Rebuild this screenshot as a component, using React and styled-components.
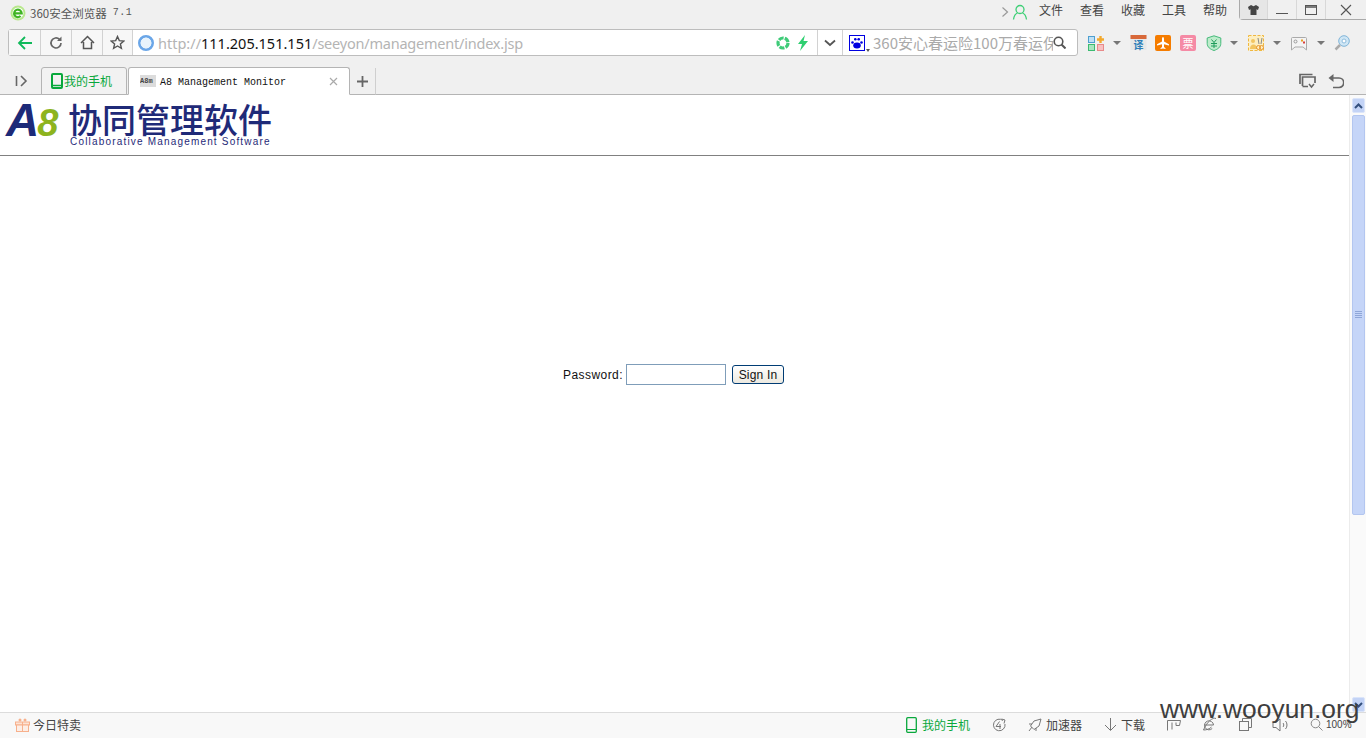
import styled, { createGlobalStyle } from "styled-components";

const GlobalStyle = createGlobalStyle`
  html, body {
    margin: 0;
    padding: 0;
    background: #fff;
    overflow: hidden;
  }
  * { box-sizing: border-box; }
`;

const cjk = `"Noto Sans CJK SC", "Noto Sans", sans-serif`;

const Shell = styled.div`
  position: relative;
  width: 1366px;
  height: 738px;
  display: flex;
  flex-direction: column;
  overflow: hidden;
  font-family: ${cjk};
`;

/* browser chrome */
const Chrome = styled.div`
  height: 95px;
  flex: none;
  display: flex;
  flex-direction: column;
  background: #f0f0f0;
  border-bottom: 1px solid #b4b4b4;
`;

const TitleBar = styled.div`
  height: 29px;
  flex: none;
  display: flex;
  align-items: flex-start;
  padding-left: 10px;
`;

const AppTitle = styled.div`
  display: flex;
  align-items: center;
  height: 25px;
  font-size: 11.5px;
  color: #555;
  gap: 4px;
`;

const Version = styled.span`
  font-family: "Liberation Mono", monospace;
  font-size: 10px;
  letter-spacing: 0.6px;
  margin-left: 2px;
`;

const TitleRight = styled.div`
  margin-left: auto;
  display: flex;
  align-items: flex-start;
`;

const Menu = styled.div`
  display: flex;
  align-items: center;
  height: 19px;
  gap: 17px;
  margin-right: 12px;
  font-size: 12px;
  color: #444;
`;

const MenuIcons = styled.div`
  display: flex;
  align-items: center;
  gap: 3px;
  margin-right: 11px;
  height: 24px;
`;

const WindowButtons = styled.div`
  display: flex;
  width: 127px;
  height: 20px;
  border-left: 1px solid #aaa;
  border-bottom: 1px solid #aaa;
  border-bottom-left-radius: 4px;
`;

const WindowButton = styled.div`
  width: ${(p) => p.$w}px;
  display: flex;
  align-items: center;
  justify-content: center;
  border-right: ${(p) => (p.$last ? "none" : "1px solid #d8d8d8")};
  background: ${(p) => (p.$shaded ? "#e6e6e6" : "transparent")};
`;

const NavRow = styled.div`
  height: 27px;
  flex: none;
  display: flex;
  align-items: center;
  padding-left: 8px;
`;

const AddressBar = styled.div`
  width: 1070px;
  height: 27px;
  display: flex;
  align-items: stretch;
  background: #fff;
  border: 1px solid #bdbdbd;
  border-radius: 3px;
`;

const NavButton = styled.div`
  width: ${(p) => p.$w || 31}px;
  flex: none;
  display: flex;
  align-items: center;
  justify-content: center;
  background: #f7f7f7;
  border-right: 1px solid #d2d2d2;
`;

const UrlBox = styled.div`
  flex: 1;
  display: flex;
  align-items: center;
  padding-left: 5px;
  gap: 4px;
  min-width: 0;
`;

const Url = styled.div`
  font-family: "Noto Sans", sans-serif;
  font-size: 14.5px;
  color: #b4b4b4;
  white-space: nowrap;
`;

const Host = styled.span`
  color: #111;
`;

const UrlPath = styled.span`
  letter-spacing: -0.22px;
`;

const UrlIcons = styled.div`
  margin-left: auto;
  display: flex;
  align-items: center;
  gap: 6px;
  padding-right: 8px;
`;

const DropButton = styled.div`
  width: 26px;
  flex: none;
  display: flex;
  align-items: center;
  justify-content: center;
  border-left: 1px solid #d2d2d2;
  border-right: 1px solid #d2d2d2;
`;

const SearchBox = styled.div`
  width: 234px;
  flex: none;
  display: flex;
  align-items: center;
  padding-left: 6px;
`;

const SearchEngine = styled.div`
  position: relative;
  width: 16px;
  height: 16px;
  flex: none;
  margin-right: 8px;
`;

const EngineCaret = styled.span`
  position: absolute;
  right: -5px;
  bottom: -1px;
  border: 2px solid transparent;
  border-top: 3px solid #555;
  border-bottom: none;
`;

const SearchText = styled.div`
  width: 180px;
  flex: none;
  overflow: hidden;
  white-space: nowrap;
  font-size: 15px;
  color: #aaa;
`;

const Tools = styled.div`
  display: flex;
  align-items: center;
  margin-left: 10px;
`;

const ToolSlot = styled.div`
  width: ${(p) => p.$w}px;
  flex: none;
  display: flex;
  align-items: center;
`;

const Caret = styled.span`
  display: block;
  margin-left: ${(p) => p.$ml || 9}px;
  border-left: 4px solid transparent;
  border-right: 4px solid transparent;
  border-top: 4px solid #777;
`;

const TabRow = styled.div`
  flex: 1;
  display: flex;
  align-items: flex-end;
  padding: 0 22px 0 15px;
  margin-bottom: -1px;
`;

const SideToggle = styled.div`
  width: 26px;
  height: 28px;
  display: flex;
  align-items: center;
`;

const Tab = styled.div`
  height: 28px;
  display: flex;
  align-items: center;
  width: ${(p) => p.$w}px;
  margin-right: 1px;
  background: ${(p) => (p.$active ? "#fff" : "#f2f2f2")};
  border: 1px solid #b4b4b4;
  border-bottom: ${(p) => (p.$active ? "1px solid #fff" : "1px solid #b4b4b4")};
  border-radius: 3px 3px 0 0;
`;

const PhoneTab = styled(Tab)`
  padding: 0 0 1px 9px;
  gap: 1px;
  font-size: 12px;
  color: #09a83c;
`;

const PageTab = styled(Tab)`
  padding-left: 11px;
  gap: 4px;
`;

const Favicon = styled.span`
  width: 16px;
  height: 12px;
  flex: none;
  background: #dcdcdc;
  font-family: "Liberation Mono", monospace;
  font-size: 7px;
  font-weight: 700;
  line-height: 12px;
  color: #444;
  white-space: nowrap;
  overflow: hidden;
`;

const TabTitle = styled.span`
  font-family: "Liberation Mono", monospace;
  font-size: 10px;
  color: #111;
  white-space: nowrap;
  padding-top: 2px;
`;

const TabClose = styled.span`
  margin-left: auto;
  margin-right: 11px;
  display: flex;
`;

const NewTab = styled.div`
  width: 26px;
  height: 27px;
  margin-left: -1px;
  display: flex;
  align-items: center;
  justify-content: center;
  border-right: 1px solid #cfcfcf;
  border-bottom: 1px solid #b4b4b4;
`;

const TabActions = styled.div`
  margin-left: auto;
  height: 28px;
  display: flex;
  align-items: center;
  gap: 12px;
`;

/* page */
const Viewport = styled.div`
  flex: 1;
  display: flex;
  min-height: 0;
`;

const Page = styled.div`
  flex: 1;
  display: flex;
  flex-direction: column;
  background: #fff;
`;

const Banner = styled.div`
  height: 61px;
  flex: none;
  display: flex;
  align-items: flex-start;
  padding: 6px 0 0 6px;
  border-bottom: 1px solid #808080;
`;

const Mark = styled.div`
  width: 62px;
  height: 36px;
  padding-top: 1px;
  display: flex;
  align-items: baseline;
  font-family: "Liberation Sans", sans-serif;
  font-style: italic;
  font-weight: 700;
  line-height: 36px;
`;

const MarkA = styled.span`
  color: #1d2a78;
  font-size: 46px;
`;

const MarkEight = styled.span`
  color: #8db41e;
  font-size: 38px;
  margin-left: -2px;
`;

const BrandText = styled.div`
  display: flex;
  flex-direction: column;
`;

const BrandName = styled.div`
  font-family: ${cjk};
  font-size: 34px;
  font-weight: 500;
  line-height: 36px;
  height: 36px;
  color: #1f2a78;
  white-space: nowrap;
`;

const BrandSub = styled.div`
  font-family: "Liberation Sans", sans-serif;
  font-size: 10px;
  line-height: 10px;
  letter-spacing: 1.18px;
  color: #1f2a78;
  margin: 0 0 0 2px;
  white-space: nowrap;
`;

const LoginForm = styled.form`
  display: flex;
  align-items: center;
  justify-content: center;
  margin-top: 208px;
  height: 21px;
  padding-right: 2px;
  font-family: "Liberation Sans", sans-serif;
  font-size: 12px;
  color: #111;
`;

const FieldLabel = styled.label`
  margin-right: 3px;
  letter-spacing: 0.45px;
`;

const PasswordInput = styled.input`
  width: 100px;
  height: 21px;
  padding: 0 2px;
  border: 1px solid #7f9db9;
  background: #fff;
  outline: none;
`;

const SignIn = styled.button`
  width: 52px;
  height: 19px;
  margin-left: 6px;
  padding: 0;
  font-family: "Liberation Sans", sans-serif;
  font-size: 12px;
  letter-spacing: 0.2px;
  color: #111;
  border: 1px solid #003c74;
  border-radius: 3px;
  background: linear-gradient(#fff, #ece9e0);
`;

const Scrollbar = styled.div`
  width: 17px;
  flex: none;
  display: flex;
  flex-direction: column;
  padding: 3px 1px 0 2px;
  gap: 2px;
  background: #fafafa;
  border-left: 1px solid #ececec;
`;

const ScrollButton = styled.div`
  height: 15px;
  flex: none;
  display: flex;
  align-items: center;
  justify-content: center;
  border-radius: 2px;
  background: #c3d3f6;
  border: 1px solid #dbe5fa;
`;

const ScrollThumb = styled.div`
  height: 400px;
  flex: none;
  display: flex;
  align-items: center;
  justify-content: center;
  background: #c5d5f8;
  border: 1px solid #b3c6f0;
  border-radius: 2px;
`;

const ScrollSpacer = styled.div`
  flex: 1;
`;

const Grip = styled.span`
  width: 7px;
  height: 7px;
  margin-bottom: 2px;
  background: repeating-linear-gradient(#8fa6d8 0 1px, transparent 1px 2px);
`;

/* status bar */
const StatusBar = styled.div`
  height: 26px;
  flex: none;
  display: flex;
  align-items: center;
  padding: 0 9px 2px 15px;
  background: #f8f8f8;
  border-top: 1px solid #dcdcdc;
  font-size: 12px;
  color: #444;
`;

const StatusItem = styled.div`
  display: flex;
  align-items: center;
  gap: ${(p) => p.$gap ?? 4}px;
  width: ${(p) => (p.$w ? `${p.$w}px` : "auto")};
  flex: none;
  color: ${(p) => (p.$green ? "#09a83c" : "inherit")};
`;

const StatusRight = styled.div`
  margin-left: auto;
  display: flex;
  align-items: center;
`;

const ZoomText = styled.span`
  font-family: "Liberation Sans", sans-serif;
  font-size: 10px;
`;

const Watermark = styled.div`
  position: absolute;
  left: 1160px;
  top: 693px;
  font-family: "Liberation Sans", sans-serif;
  font-size: 26.4px;
  line-height: 32px;
  color: #3e3e3e;
  white-space: nowrap;
`;

const Svg = ({ s = 16, h, children, vb }) => (
  <svg width={s} height={h || s} viewBox={vb || `0 0 ${s} ${h || s}`} fill="none" style={{ display: "block", flex: "none" }}>
    {children}
  </svg>
);

const GREY = "#666";

const LogoIcon = () => (
  <Svg s={16}>
    <circle cx="8" cy="8" r="7.500" fill="#b8e88c" />
    <circle cx="8" cy="8" r="5.500" fill="#fff" />
    <path d="M4.300 8.300h7.400a3.800 3.800 0 1 0-1.100 2.800" stroke="#3fb422" strokeWidth="2.200" />
  </Svg>
);

const ToolIcons = [
  <Svg s={16} key="apps">
    <rect x=".5" y="1.5" width="6" height="6" fill="#bfe0f5" stroke="#4d9fd0" />
    <rect x=".5" y="9.5" width="6" height="6" fill="#a8e6c0" stroke="#3dbb72" />
    <rect x="9.5" y="9.5" width="6" height="6" fill="#f8c0c0" stroke="#e88a8a" />
    <path d="M12.5 1v7M9 4.5h7" stroke="#f2a92e" strokeWidth="2.4" />
  </Svg>,
  <Svg s={17} key="fy">
    <rect x=".5" y="1" width="16" height="15" fill="#e8e8e8" />
    <rect x=".5" y="1" width="16" height="4" fill="#d8693a" />
    <text x="8.5" y="14.5" fontSize="10" fontWeight="700" fill="#2f7fb8" textAnchor="middle" fontFamily="Noto Sans CJK SC">译</text>
  </Svg>,
  <Svg s={16} key="plane">
    <rect width="16" height="16" rx="2" fill="#f57c00" />
    <path d="M8 2c.7 0 1 1 1 2v2.6l5 2.6v1.4L9 9.3V12l1.5 1.2V14L8 13.4 5.500 14v-.8L7 12V9.300l-5 1.300V9.200l5-2.600V4c0-1 .3-2 1-2z" fill="#fff" />
  </Svg>,
  <Svg s={16} key="ticket">
    <rect width="16" height="16" rx="2" fill="#f58aa5" />
    <text x="8" y="13" fontSize="11" fill="#fff" textAnchor="middle" fontFamily="Noto Sans CJK SC">票</text>
  </Svg>,
  <Svg s={16} key="shield">
    <path d="M8 .8 14.800 3v5.500c0 3.500-3 5.800-6.800 7C4.200 14.300 1.200 12 1.200 8.500V3z" fill="#bdeccb" stroke="#45b97a" />
    <path d="M5.500 4.500 8 7.500l2.500-3M5 8.500h6M5 11h6M8 7.500V13" stroke="#1e9c5a" />
  </Svg>,
  <Svg s={16} key="photo">
    <rect x=".5" y=".5" width="15" height="15" fill="#fdeec0" stroke="#f0b840" strokeDasharray="3 1.500" />
    <circle cx="5" cy="6" r="2" fill="#f3c560" />
    <path d="M2 14c0-3 1.500-4.500 3.500-4.500S9 11 9 14z" fill="#f3c560" />
    <path d="M10 3l1 6M14 3l-1 6" stroke="#888" />
    <circle cx="10.500" cy="12.500" r="2" stroke="#e8962e" />
    <circle cx="13.500" cy="12.500" r="2" stroke="#e8962e" />
  </Svg>,
  <Svg s={16} key="game">
    <path d="M1.500 2.500h13a1 1 0 0 1 1 1V15l-3.500-3H4l-3.500 3V3.500a1 1 0 0 1 1-1z" fill="#f4f4f4" stroke="#aaa" />
    <circle cx="4.500" cy="6.500" r="1.500" stroke="#999" />
    <rect x="10" y="4.500" width="2" height="2" fill="#e8a020" />
    <rect x="12" y="6.500" width="2" height="2" fill="#d84040" />
  </Svg>,
  <Svg s={16} key="magnifier">
    <circle cx="10" cy="6" r="5.300" fill="#cfe6f5" stroke="#7fb4d8" />
    <circle cx="10" cy="6" r="2" fill="#fff" stroke="#8dbcdc" />
    <path d="M6 10 1.500 14.500" stroke="#aaa" strokeWidth="2.500" />
  </Svg>,
];

export default function App() {
  return (
    <Shell>
      <GlobalStyle />
      <Chrome>
        <TitleBar>
          <AppTitle>
            <LogoIcon />
            <span>360安全浏览器</span>
            <Version>7.1</Version>
          </AppTitle>
          <TitleRight>
            <MenuIcons>
              <Svg s={8} h={12}>
                <path d="M1.500 1.500 6.500 6l-5 4.500" stroke="#999" strokeWidth="1.200" />
              </Svg>
              <Svg s={16}>
                <circle cx="8" cy="5.500" r="4" stroke="#3ecf76" strokeWidth="1.300" />
                <path d="M1.500 15.500c.5-3.500 2.500-6 4-6.500M14.500 15.500c-.5-3.500-2.500-6-4-6.500" stroke="#3ecf76" strokeWidth="1.300" />
              </Svg>
            </MenuIcons>
            <Menu>
              <span>文件</span>
              <span>查看</span>
              <span>收藏</span>
              <span>工具</span>
              <span>帮助</span>
            </Menu>
            <WindowButtons>
              <WindowButton $w={28} $shaded>
                <Svg s={13} h={12}>
                  <path d="M4 1 1 3l1 3 1.500-.7V11h6V5.300L11 6l1-3-3-2-2.500 1.200z" fill="#444" />
                </Svg>
              </WindowButton>
              <WindowButton $w={29}>
                <Svg s={12}>
                  <path d="M0 9.500h12" stroke="#555" />
                </Svg>
              </WindowButton>
              <WindowButton $w={29}>
                <Svg s={13} h={12}>
                  <rect x=".5" y="1.500" width="11" height="9" stroke="#555" />
                  <path d="M1 3h10" stroke="#555" strokeWidth="1.500" />
                </Svg>
              </WindowButton>
              <WindowButton $w={40} $last>
                <Svg s={12}>
                  <path d="M1 1l10 10M11 1 1 11" stroke="#555" strokeWidth="1.100" />
                </Svg>
              </WindowButton>
            </WindowButtons>
          </TitleRight>
        </TitleBar>

        <NavRow>
          <AddressBar>
            <NavButton $w={32}>
              <Svg s={16}>
                <path d="M15 8H2M8 2 2 8l6 6" stroke="#10b95a" strokeWidth="1.800" />
              </Svg>
            </NavButton>
            <NavButton>
              <Svg s={14}>
                <path d="M12 7a5 5 0 1 1-1.500-3.600" stroke={GREY} strokeWidth="1.700" />
                <path d="M12.500 .5v4.500H8z" fill={GREY} />
              </Svg>
            </NavButton>
            <NavButton>
              <Svg s={15}>
                <path d="M1 8 7.500 1.500 14 8M3.500 7v6.500h8V7" stroke="#555" strokeWidth="1.500" />
              </Svg>
            </NavButton>
            <NavButton $w={30}>
              <Svg s={15}>
                <path d="M7.500 1.500 9.300 5.600l4.500.4-3.400 2.900 1 4.400-3.900-2.300-3.900 2.300 1-4.400L1.200 6l4.500-.4z" stroke="#555" strokeWidth="1.400" />
              </Svg>
            </NavButton>
            <UrlBox>
              <Svg s={16}>
                <circle cx="8" cy="8" r="6.700" stroke="#6aa6e8" strokeWidth="2.600" />
                <circle cx="8" cy="8" r="5.300" fill="#e8f3fc" />
              </Svg>
              <Url>
                http://<Host>111.205.151.151</Host>
                <UrlPath>/seeyon/management/index.jsp</UrlPath>
              </Url>
              <UrlIcons>
                <Svg s={14}>
                  <circle cx="7" cy="7" r="5" stroke="#3ecb78" strokeWidth="3.200" strokeDasharray="5 1.200" />
                </Svg>
                <Svg s={13} h={16}>
                  <path d="M9 0 2 9h4l-2 7 8-10H7.500z" fill="#2ecf70" />
                </Svg>
              </UrlIcons>
            </UrlBox>
            <DropButton>
              <Svg s={12} h={8}>
                <path d="M1 1.500 6 6l5-4.500" stroke="#555" strokeWidth="1.800" />
              </Svg>
            </DropButton>
            <SearchBox>
              <SearchEngine>
                <Svg s={16}>
                  <rect x=".5" y=".5" width="15" height="15" fill="#fff" stroke="#0000e0" />
                  <ellipse cx="8" cy="10.500" rx="3.800" ry="3" fill="#0000e0" />
                  <circle cx="3.500" cy="7.500" r="1.300" fill="#0000e0" />
                  <circle cx="12.500" cy="7.500" r="1.300" fill="#0000e0" />
                  <circle cx="6.300" cy="4.200" r="1.300" fill="#0000e0" />
                  <circle cx="9.700" cy="4.200" r="1.300" fill="#0000e0" />
                </Svg>
                <EngineCaret />
              </SearchEngine>
              <SearchText>360安心春运险100万春运保</SearchText>
              <Svg s={13}>
                <circle cx="5.500" cy="5.500" r="4.300" stroke="#555" strokeWidth="1.600" />
                <path d="M8.500 8.500 12.500 12.500" stroke="#555" strokeWidth="2" />
              </Svg>
            </SearchBox>
          </AddressBar>
          <Tools>
            <ToolSlot $w={42}>{ToolIcons[0]}<Caret $ml={9} /></ToolSlot>
            <ToolSlot $w={25}>{ToolIcons[1]}</ToolSlot>
            <ToolSlot $w={25}>{ToolIcons[2]}</ToolSlot>
            <ToolSlot $w={26}>{ToolIcons[3]}</ToolSlot>
            <ToolSlot $w={42}>{ToolIcons[4]}<Caret $ml={8} /></ToolSlot>
            <ToolSlot $w={43}>{ToolIcons[5]}<Caret $ml={9} /></ToolSlot>
            <ToolSlot $w={43}>{ToolIcons[6]}<Caret $ml={10} /></ToolSlot>
            <ToolSlot $w={16}>{ToolIcons[7]}</ToolSlot>
          </Tools>
        </NavRow>

        <TabRow>
          <SideToggle>
            <Svg s={13} h={12}>
              <path d="M1.500 1v10" stroke={GREY} strokeWidth="1.600" />
              <path d="M6 1l5 5-5 5" stroke={GREY} strokeWidth="1.600" />
            </Svg>
          </SideToggle>
          <PhoneTab $w={86}>
            <Svg s={12} h={16}>
              <rect x="1" y="1" width="10" height="14" rx="1" stroke="#09a83c" strokeWidth="2" />
              <path d="M1 12.500h10" stroke="#09a83c" strokeWidth="1.500" />
            </Svg>
            我的手机
          </PhoneTab>
          <PageTab $w={222} $active>
            <Favicon>A8m</Favicon>
            <TabTitle>A8 Management Monitor</TabTitle>
            <TabClose>
              <Svg s={9}>
                <path d="M1 1l7 7M8 1 1 8" stroke="#aaa" strokeWidth="1.200" />
              </Svg>
            </TabClose>
          </PageTab>
          <NewTab>
            <Svg s={11}>
              <path d="M5.500 0v11M0 5.500h11" stroke={GREY} strokeWidth="1.800" />
            </Svg>
          </NewTab>
          <TabActions>
            <Svg s={17} h={16}>
              <path d="M1 11V1.500h12.500M3.500 13V4H16v6" stroke={GREY} strokeWidth="1.700" />
              <path d="M3.500 13.500H9M10 11l2.500 3 2.500-3" stroke={GREY} strokeWidth="1.500" />
            </Svg>
            <Svg s={16} h={15}>
              <path d="M5 4h6a4 4 0 0 1 0 9.500H5" stroke={GREY} strokeWidth="1.700" />
              <path d="M5.500 0v8L0.500 4z" fill={GREY} />
            </Svg>
          </TabActions>
        </TabRow>
      </Chrome>

      <Viewport>
        <Page>
          <Banner>
            <Mark>
              <MarkA>A</MarkA>
              <MarkEight>8</MarkEight>
            </Mark>
            <BrandText>
              <BrandName>协同管理软件</BrandName>
              <BrandSub>Collaborative Management Software</BrandSub>
            </BrandText>
          </Banner>
          <LoginForm onSubmit={(e) => e.preventDefault()}>
            <FieldLabel>Password:</FieldLabel>
            <PasswordInput type="password" />
            <SignIn>Sign In</SignIn>
          </LoginForm>
        </Page>
        <Scrollbar>
          <ScrollButton>
            <Svg s={9} h={6}>
              <path d="M1 5l3.500-3.500L8 5" stroke="#34507e" strokeWidth="2" />
            </Svg>
          </ScrollButton>
          <ScrollThumb>
            <Grip />
          </ScrollThumb>
          <ScrollSpacer />
          <ScrollButton>
            <Svg s={9} h={6}>
              <path d="M1 1l3.500 3.500L8 1" stroke="#34507e" strokeWidth="2" />
            </Svg>
          </ScrollButton>
        </Scrollbar>
      </Viewport>

      <StatusBar>
        <StatusItem $gap={3}>
          <Svg s={15} h={14}>
            <rect x=".5" y="4" width="14" height="3" fill="#fde3d4" stroke="#f7b08c" />
            <rect x="1.500" y="7" width="12" height="6.500" fill="#fdeee6" stroke="#f7b08c" />
            <path d="M7.500 4v9.500" stroke="#f7b08c" />
            <circle cx="5" cy="2" r="1.500" fill="#f7b08c" />
            <circle cx="10" cy="2" r="1.500" fill="#f7b08c" />
          </Svg>
          <span>今日特卖</span>
        </StatusItem>
        <StatusRight>
          <StatusItem $green $gap={5} $w={86}>
            <Svg s={11} h={16}>
              <rect x=".7" y=".7" width="9.600" height="14.600" rx="1" stroke="#09a83c" strokeWidth="1.300" />
              <path d="M1 12.500h9" stroke="#09a83c" />
            </Svg>
            我的手机
          </StatusItem>
          <StatusItem $w={36}>
            <Svg s={14}>
              <path d="M11 2.500a5.800 5.800 0 1 0 2 3.500" stroke="#777" />
              <path d="M7.500 3.500 4 8.500h5M8 6v5M9.500 1l3.500 1-1 3.500" stroke="#777" />
            </Svg>
          </StatusItem>
          <StatusItem $w={76}>
            <Svg s={14}>
              <path d="M13 1 6 3 2.500 8 6 11.500l5-3.500zM4 9l-3 4M1 6h3M8 13v-3" stroke="#777" />
            </Svg>
            加速器
          </StatusItem>
          <StatusItem $w={63}>
            <Svg s={13}>
              <path d="M6.500 0v12M1 7l5.500 5.500L12 7" stroke="#777" />
            </Svg>
            下载
          </StatusItem>
          <StatusItem $w={35}>
            <Svg s={14} h={12}>
              <path d="M.5 1.500h13l-1 5H9V3.500M5 3.500v7M.5 1.500v10" stroke="#777" />
            </Svg>
          </StatusItem>
          <StatusItem $w={37}>
            <Svg s={15}>
              <path d="M2.500 8h9a4.500 4.500 0 1 0-1.300 3.500" stroke="#777" />
              <path d="M14 1.500c-3-1.500-9 3-12.500 11.500 3 0 6-1 8-3" stroke="#777" />
            </Svg>
          </StatusItem>
          <StatusItem $w={33}>
            <Svg s={13}>
              <rect x=".5" y="3.500" width="9" height="9" stroke="#777" />
              <path d="M3.500 3V.5h9v9H10" stroke="#777" />
            </Svg>
          </StatusItem>
          <StatusItem $w={38}>
            <Svg s={17} h={14}>
              <path d="M1 4.500h3L8 1v12L4 9.500H1zM11 5c1 1 1 3 0 4M13.500 3c2 2 2 6 0 8" stroke="#777" />
            </Svg>
          </StatusItem>
          <StatusItem $w={47} $gap={3}>
            <Svg s={13}>
              <circle cx="5.500" cy="5.500" r="4.300" stroke="#888" />
              <path d="M8.500 8.500 12.500 12.500" stroke="#888" />
            </Svg>
            <ZoomText>100%</ZoomText>
          </StatusItem>
        </StatusRight>
      </StatusBar>

      <Watermark>www.wooyun.org</Watermark>
    </Shell>
  );
}
